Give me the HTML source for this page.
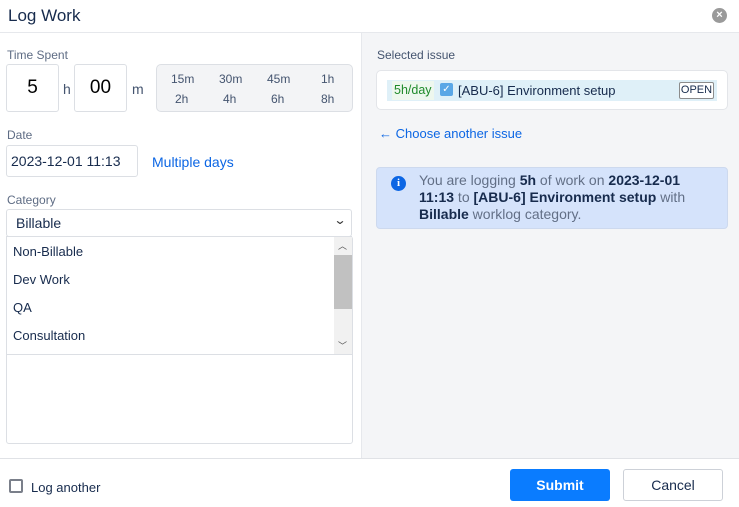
<!DOCTYPE html>
<html><head><meta charset="utf-8"><style>
*{box-sizing:border-box;margin:0;padding:0}
body{width:739px;height:507px;overflow:hidden;background:#fff;font-family:"Liberation Sans",Arial,sans-serif;color:#172b4d;position:relative}
.a{position:absolute}
.lbl{font-size:12px;color:#5e6c84}
.box{border:1px solid #dcdfe4;border-radius:3px;background:#fff}
</style></head><body>
<div class="a" style="left:8px;top:6px;font-size:17px;color:#172b4d">Log Work</div>
<div class="a" style="left:712px;top:8px;width:15px;height:15px;border-radius:50%;background:#9a9a9a;color:#fff;font-size:11px;line-height:15px;text-align:center;font-weight:bold">×</div>
<div class="a" style="left:0;top:32px;width:739px;height:1px;background:#e6e8ec"></div>
<div class="a" style="left:361px;top:33px;width:378px;height:425px;background:#f4f5f7;border-left:1px solid #e6e8ec"></div>
<div class="a" style="left:0;top:458px;width:739px;height:1px;background:#e0e2e6"></div>

<div class="a lbl" style="left:7px;top:48px">Time Spent</div>
<div class="a box" style="left:6px;top:64px;width:53px;height:48px;font-size:19px;line-height:46px;text-align:center;color:#000">5</div>
<div class="a" style="left:63px;top:81px;font-size:14px;color:#44546f">h</div>
<div class="a box" style="left:74px;top:64px;width:53px;height:48px;font-size:19px;line-height:46px;text-align:center;color:#000">00</div>
<div class="a" style="left:132px;top:81px;font-size:14px;color:#44546f">m</div>
<div class="a" style="left:156px;top:64px;width:197px;height:48px;background:#f3f4f6;border:1px solid #dcdfe4;border-radius:5px;font-size:12px;color:#44546f">
<div class="a" style="left:14px;top:7px">15m</div><div class="a" style="left:62px;top:7px">30m</div><div class="a" style="left:110px;top:7px">45m</div><div class="a" style="left:164px;top:7px">1h</div>
<div class="a" style="left:18px;top:27px">2h</div><div class="a" style="left:66px;top:27px">4h</div><div class="a" style="left:114px;top:27px">6h</div><div class="a" style="left:164px;top:27px">8h</div>
</div>

<div class="a lbl" style="left:7px;top:128px">Date</div>
<div class="a box" style="left:6px;top:145px;width:132px;height:32px;font-size:14px;line-height:30px;padding-left:4px;color:#172b4d">2023-12-01 11:13</div>
<div class="a" style="left:152px;top:154px;font-size:14px;color:#0c66e4">Multiple days</div>

<div class="a lbl" style="left:7px;top:193px">Category</div>
<div class="a box" style="left:6px;top:236px;width:347px;height:208px"></div>
<div class="a box" style="left:6px;top:209px;width:346px;height:28px;font-size:14px;line-height:26px;padding-left:9px">Billable</div>
<div class="a" style="left:335px;top:213px;font-size:12px;color:#333;transform:scaleX(1.3)">⌄</div>
<div class="a" style="left:6px;top:236px;width:346px;height:119px;border:1px solid #dcdfe4;background:#fff;font-size:13px;color:#172b4d">
<div class="a" style="left:6px;top:7px">Non-Billable</div>
<div class="a" style="left:6px;top:35px">Dev Work</div>
<div class="a" style="left:6px;top:63px">QA</div>
<div class="a" style="left:6px;top:91px">Consultation</div>
<div class="a" style="left:327px;top:0;width:18px;height:117px;background:#f1f1f1"></div>
<div class="a" style="left:327px;top:18px;width:18px;height:54px;background:#c1c1c1"></div>
<div class="a" style="left:331px;top:2px;font-size:9px;color:#555">︿</div>
<div class="a" style="left:331px;top:102px;font-size:9px;color:#555">﹀</div>
</div>

<div class="a lbl" style="left:377px;top:48px;color:#44546f">Selected issue</div>
<div class="a" style="left:376px;top:70px;width:352px;height:40px;background:#fff;border:1px solid #e3e5e9;border-radius:5px"></div>
<div class="a" style="left:387px;top:80px;width:330px;height:21px;background:#dff0f8"></div>
<div class="a" style="left:392px;top:81px;height:19px;padding:0 2px;background:#eef7ee;color:#1f8a2a;font-size:12.5px;line-height:19px">5h/day</div>
<div class="a" style="left:440px;top:83px;width:13px;height:13px;background:#5aa7e6;border-radius:2px;color:#fff;font-size:10px;line-height:13px;text-align:center">✓</div>
<div class="a" style="left:458px;top:83px;font-size:13px;color:#172b4d">[ABU-6] Environment setup</div>
<div class="a" style="left:679px;top:82px;width:35px;height:17px;border:1px solid #8c8c8c;border-radius:2px;background:#fff;font-size:11px;line-height:15px;text-align:center;color:#172b4d">OPEN</div>
<div class="a" style="left:379px;top:126px;font-size:13px;color:#0c66e4">← Choose another issue</div>
<div class="a" style="left:376px;top:167px;width:352px;height:62px;background:#d5e3fb;border:1px solid #cdd9ee;border-radius:4px"></div>
<div class="a" style="left:391px;top:176px;width:15px;height:15px;border-radius:50%;background:#0c66e4;color:#fff;font-size:11px;font-weight:bold;line-height:15px;text-align:center;font-family:'Liberation Serif',serif">i</div>
<div class="a" style="left:419px;top:172px;width:290px;font-size:14px;line-height:17px;color:#626f86">You are logging <b style="color:#172b4d">5h</b> of work on <b style="color:#172b4d">2023-12-01 11:13</b> to <b style="color:#172b4d">[ABU-6] Environment setup</b> with <b style="color:#172b4d">Billable</b> worklog category.</div>

<div class="a" style="left:9px;top:479px;width:14px;height:14px;border:2px solid #7a7f8a;border-radius:2px"></div>
<div class="a" style="left:31px;top:480px;font-size:13px;color:#172b4d">Log another</div>
<div class="a" style="left:510px;top:469px;width:100px;height:32px;background:#0a7cff;border-radius:3px;color:#fff;font-size:14px;font-weight:bold;line-height:32px;text-align:center">Submit</div>
<div class="a" style="left:623px;top:469px;width:100px;height:32px;border:1px solid #cdd1d8;border-radius:3px;color:#172b4d;font-size:14px;line-height:30px;text-align:center">Cancel</div>
</body></html>
